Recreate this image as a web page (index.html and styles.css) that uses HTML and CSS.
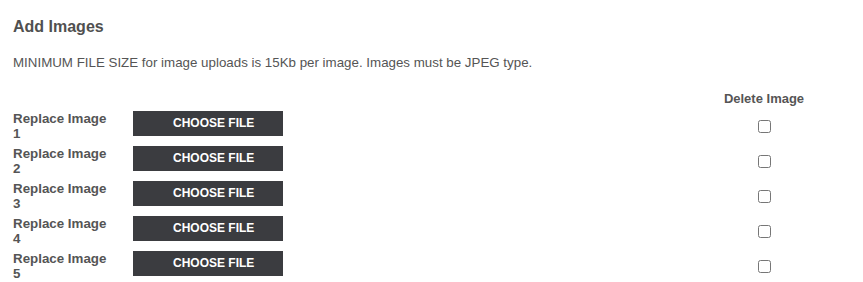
FILE: index.html
```html
<!DOCTYPE html>
<html lang="en">
<head>
<meta charset="utf-8">
<title>Add Images</title>
<link rel="stylesheet" href="styles.css">
</head>
<body>
<div class="panel">
  <h2 class="title">Add Images</h2>
  <p class="note">MINIMUM FILE SIZE for image uploads is 15Kb per image. Images must be JPEG type.</p>
  <div class="grid">
    <div class="head-spacer"></div>
    <div class="head-spacer"></div>
    <div class="head-spacer"></div>
    <div class="head">Delete Image</div>

    <div class="label">Replace Image 1</div>
    <label class="file-btn">CHOOSE FILE<input type="file" class="file-input"></label>
    <div></div>
    <div class="check"><input type="checkbox"></div>

    <div class="label">Replace Image 2</div>
    <label class="file-btn">CHOOSE FILE<input type="file" class="file-input"></label>
    <div></div>
    <div class="check"><input type="checkbox"></div>

    <div class="label">Replace Image 3</div>
    <label class="file-btn">CHOOSE FILE<input type="file" class="file-input"></label>
    <div></div>
    <div class="check"><input type="checkbox"></div>

    <div class="label">Replace Image 4</div>
    <label class="file-btn">CHOOSE FILE<input type="file" class="file-input"></label>
    <div></div>
    <div class="check"><input type="checkbox"></div>

    <div class="label">Replace Image 5</div>
    <label class="file-btn">CHOOSE FILE<input type="file" class="file-input"></label>
    <div></div>
    <div class="check"><input type="checkbox"></div>
  </div>
</div>
</body>
</html>
```
FILE: styles.css
```css
html, body {
  margin: 0;
  padding: 0;
  background: #ffffff;
}
body {
  font-family: "Liberation Sans", Arial, sans-serif;
  color: #555555;
}
.panel {
  padding: 18px 54px 0 13px;
}
.title {
  margin: 0;
  font-size: 16px;
  font-weight: bold;
  line-height: 18px;
  color: #505050;
}
.note {
  margin: 19px 0 0 0;
  font-size: 13.33px;
  line-height: 15px;
  color: #555555;
}
.grid {
  margin-top: 21px;
  display: grid;
  grid-template-columns: 120px 150px 1fr 90px;
  row-gap: 5px;
}
.head {
  font-size: 13px;
  font-weight: bold;
  line-height: 15px;
  text-align: center;
  color: #555555;
}
.label {
  width: 100px;
  font-size: 13.33px;
  font-weight: bold;
  line-height: 15px;
  color: #555555;
}
.file-btn {
  align-self: start;
  display: block;
  height: 25px;
  line-height: 25px;
  padding-left: 40px;
  background: #3b3c40;
  color: #ffffff;
  font-size: 12px;
  font-weight: bold;
  cursor: pointer;
}
.file-input {
  display: none;
}
.check {
  display: flex;
  align-items: center;
  justify-content: center;
}
.check input {
  margin: 0;
  width: 13px;
  height: 13px;
}
```
